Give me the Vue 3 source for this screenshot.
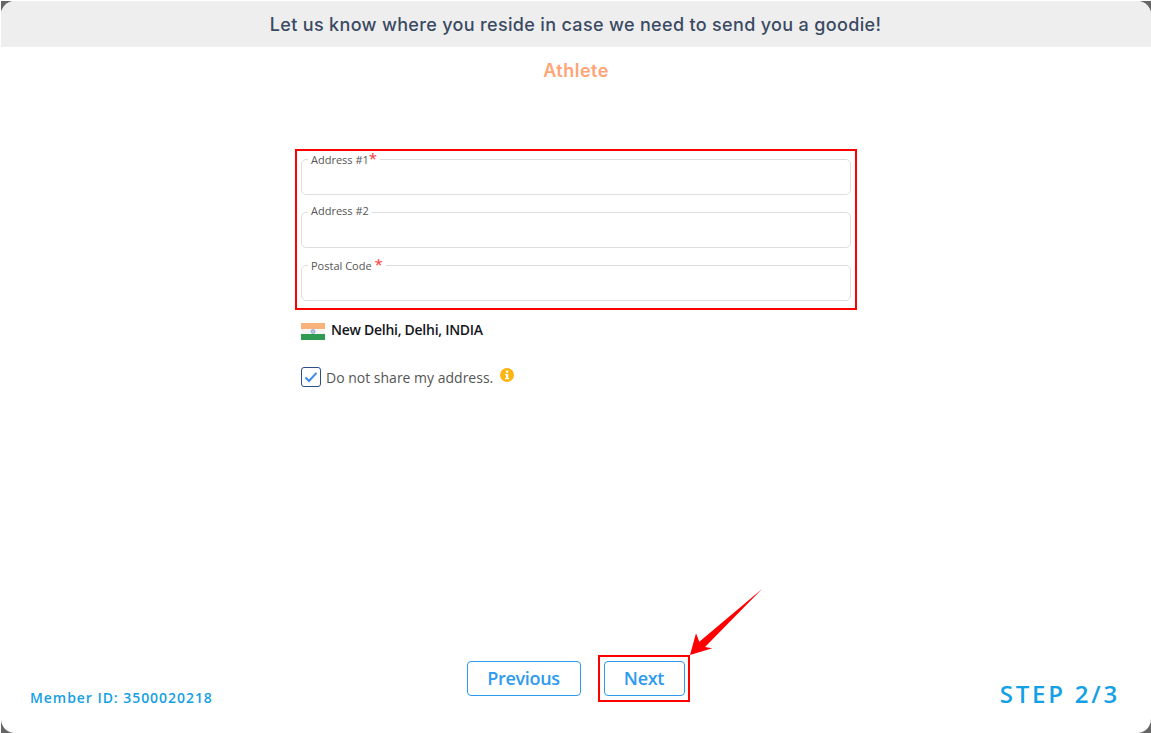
<script setup>
const fields = [
  { label: 'Address #1', required: true, tight: true, shift: 'down' },
  { label: 'Address #2', required: false, shift: 'up' },
  { label: 'Postal Code', required: true, shift: 'down' }
]
</script>

<template>
  <div class="screen">
    <div class="frame">
      <div class="modal">
        <header class="head">Let us know where you reside in case we need to send you a goodie!</header>
        <div class="role">Athlete</div>

        <section class="form">
          <div class="highlight">
            <fieldset v-for="f in fields" :key="f.label" class="field">
              <legend :class="[f.shift, { tight: f.tight }]">{{ f.label }}<span v-if="f.required" class="req">*</span></legend>
            </fieldset>
          </div>

          <div class="place">
            <svg class="flag" width="24" height="17" viewBox="0 0 24 17">
              <rect width="24" height="6" fill="#f9b27c" />
              <rect y="6" width="24" height="5" fill="#f4f4f4" />
              <rect y="11" width="24" height="6" fill="#2f9a52" />
              <circle cx="12" cy="8.5" r="2" fill="#b4c4e0" stroke="#6f8cc0" stroke-width=".6" />
            </svg>
            <span>New Delhi, Delhi, INDIA</span>
          </div>

          <label class="check">
            <span class="box">
              <svg width="14" height="12" viewBox="0 0 14 12"><path d="M1.5 6.5 L5 10 L12.5 1.8" fill="none" stroke="#3b8bea" stroke-width="2" /></svg>
            </span>
            <span class="check-text">Do not share my address.</span>
            <svg class="info" width="14" height="14" viewBox="0 0 14 14">
              <circle cx="7" cy="7" r="7" fill="#fdb515" />
              <rect x="5.9" y="2.6" width="2.3" height="2.2" fill="#fff" />
              <path d="M5 6h3.2v4h1v1.3H5V10h1V7.3H5z" fill="#fff" />
            </svg>
          </label>
        </section>

        <footer class="foot">
          <div class="member">Member ID: 3500020218</div>
          <div class="actions">
            <button class="btn prev" type="button">Previous</button>
            <div class="next-wrap">
              <button class="btn next" type="button">Next</button>
              <svg class="arrow" width="80" height="75" viewBox="0 0 80 75">
                <path d="M74 0 L11.3 52.7 L8 44.3 L2 66 L24.3 59.3 L17 58 Z" fill="#ff0000" />
              </svg>
            </div>
          </div>
          <div class="step">STEP 2/3</div>
        </footer>
      </div>
    </div>
  </div>
</template>

<style scoped>
.screen {
  width: 1151px;
  height: 733px;
  box-sizing: border-box;
  padding: 1px 0 0 1px;
  background: #fff;
  font-family: "Open Sans", sans-serif;
  overflow: hidden;
}
.frame {
  height: 100%;
  background: #666;
}
.modal {
  height: 100%;
  background: #fff;
  border-radius: 14px;
  overflow: hidden;
  display: flex;
  flex-direction: column;
}
.head {
  height: 46px;
  flex: none;
  background: #eee;
  display: flex;
  align-items: center;
  justify-content: center;
  font-family: Inter, sans-serif;
  font-size: 18px;
  font-weight: 500;
  letter-spacing: .33px;
  color: #3a4a63;
  box-sizing: border-box;
  padding-right: 1px;
}
.role {
  margin-top: 12px;
  height: 24px;
  line-height: 24px;
  text-align: center;
  font-family: Inter, sans-serif;
  font-size: 18px;
  font-weight: 600;
  letter-spacing: .5px;
  color: #ffa477;
}
.form {
  width: 562px;
  margin: 66px auto 0 294px;
  flex: 1;
}
.highlight {
  border: 2px solid #f00;
  height: 161px;
  box-sizing: border-box;
  padding: 1px 4px 0;
}
.field {
  margin: 0 0 10px;
  height: 43px;
  padding: 0;
  box-sizing: border-box;
  border: 1px solid #ddd;
  border-radius: 5px;
  min-width: 0;
}
.field legend {
  margin-left: 6px;
  padding: 0 3px;
  font-size: 11px;
  line-height: 13px;
  color: #555;
}
.field legend.down { padding-top: 1px; }
.field legend.up { line-height: 12px; padding-bottom: 2px; }
.req {
  color: #f33;
  font-size: 15px;
  line-height: 10px;
  margin-left: 3px;
}
.tight .req { margin-left: 0; }
.place {
  display: flex;
  align-items: center;
  gap: 6px;
  margin: 9px 0 0 6px;
  height: 20px;
  font-size: 14px;
  font-weight: 600;
  color: #14161c;
  letter-spacing: -0.27px;
}
.flag { margin-top: 5px; }
.check {
  display: flex;
  align-items: center;
  margin: 27px 0 0 6px;
  height: 22px;
  font-size: 14px;
  color: #555;
}
.box {
  width: 18px;
  height: 18px;
  border: 1px solid #2d4f86;
  border-radius: 3px;
  display: flex;
  align-items: center;
  justify-content: center;
}
.check-text { margin-left: 5px; }
.info { margin: -5px 0 0 7px; }
.foot {
  position: relative;
  height: 87px;
  flex: none;
  display: flex;
  align-items: flex-start;
  justify-content: center;
}
.member {
  position: absolute;
  left: 29px;
  top: 42px;
  font-size: 14px;
  font-weight: 600;
  letter-spacing: .95px;
  color: #14a0e4;
}
.step {
  position: absolute;
  right: 31px;
  top: 31px;
  font-size: 24px;
  font-weight: 600;
  letter-spacing: 2.8px;
  color: #14a0e4;
}
.actions {
  display: flex;
  margin-top: 15px;
  gap: 23px;
  margin-right: 1px;
}
.btn {
  height: 35px;
  box-sizing: border-box;
  background: #fff;
  border: 1px solid #2e9af0;
  border-radius: 4px;
  color: #2e9af0;
  font-family: "Open Sans", sans-serif;
  font-size: 18px;
  font-weight: 600;
  padding: 0 0 2px;
  letter-spacing: -0.3px;
}
.prev { width: 114px; }
.next { width: 81px; display: block; }
.next-wrap {
  position: relative;
  width: 81px;
}
.next-wrap::before {
  content: "";
  position: absolute;
  left: -6px;
  top: -6px;
  width: 92px;
  height: 47px;
  box-sizing: border-box;
  border: 2px solid #f00;
}
.arrow {
  position: absolute;
  left: 84px;
  top: -72px;
}
</style>
